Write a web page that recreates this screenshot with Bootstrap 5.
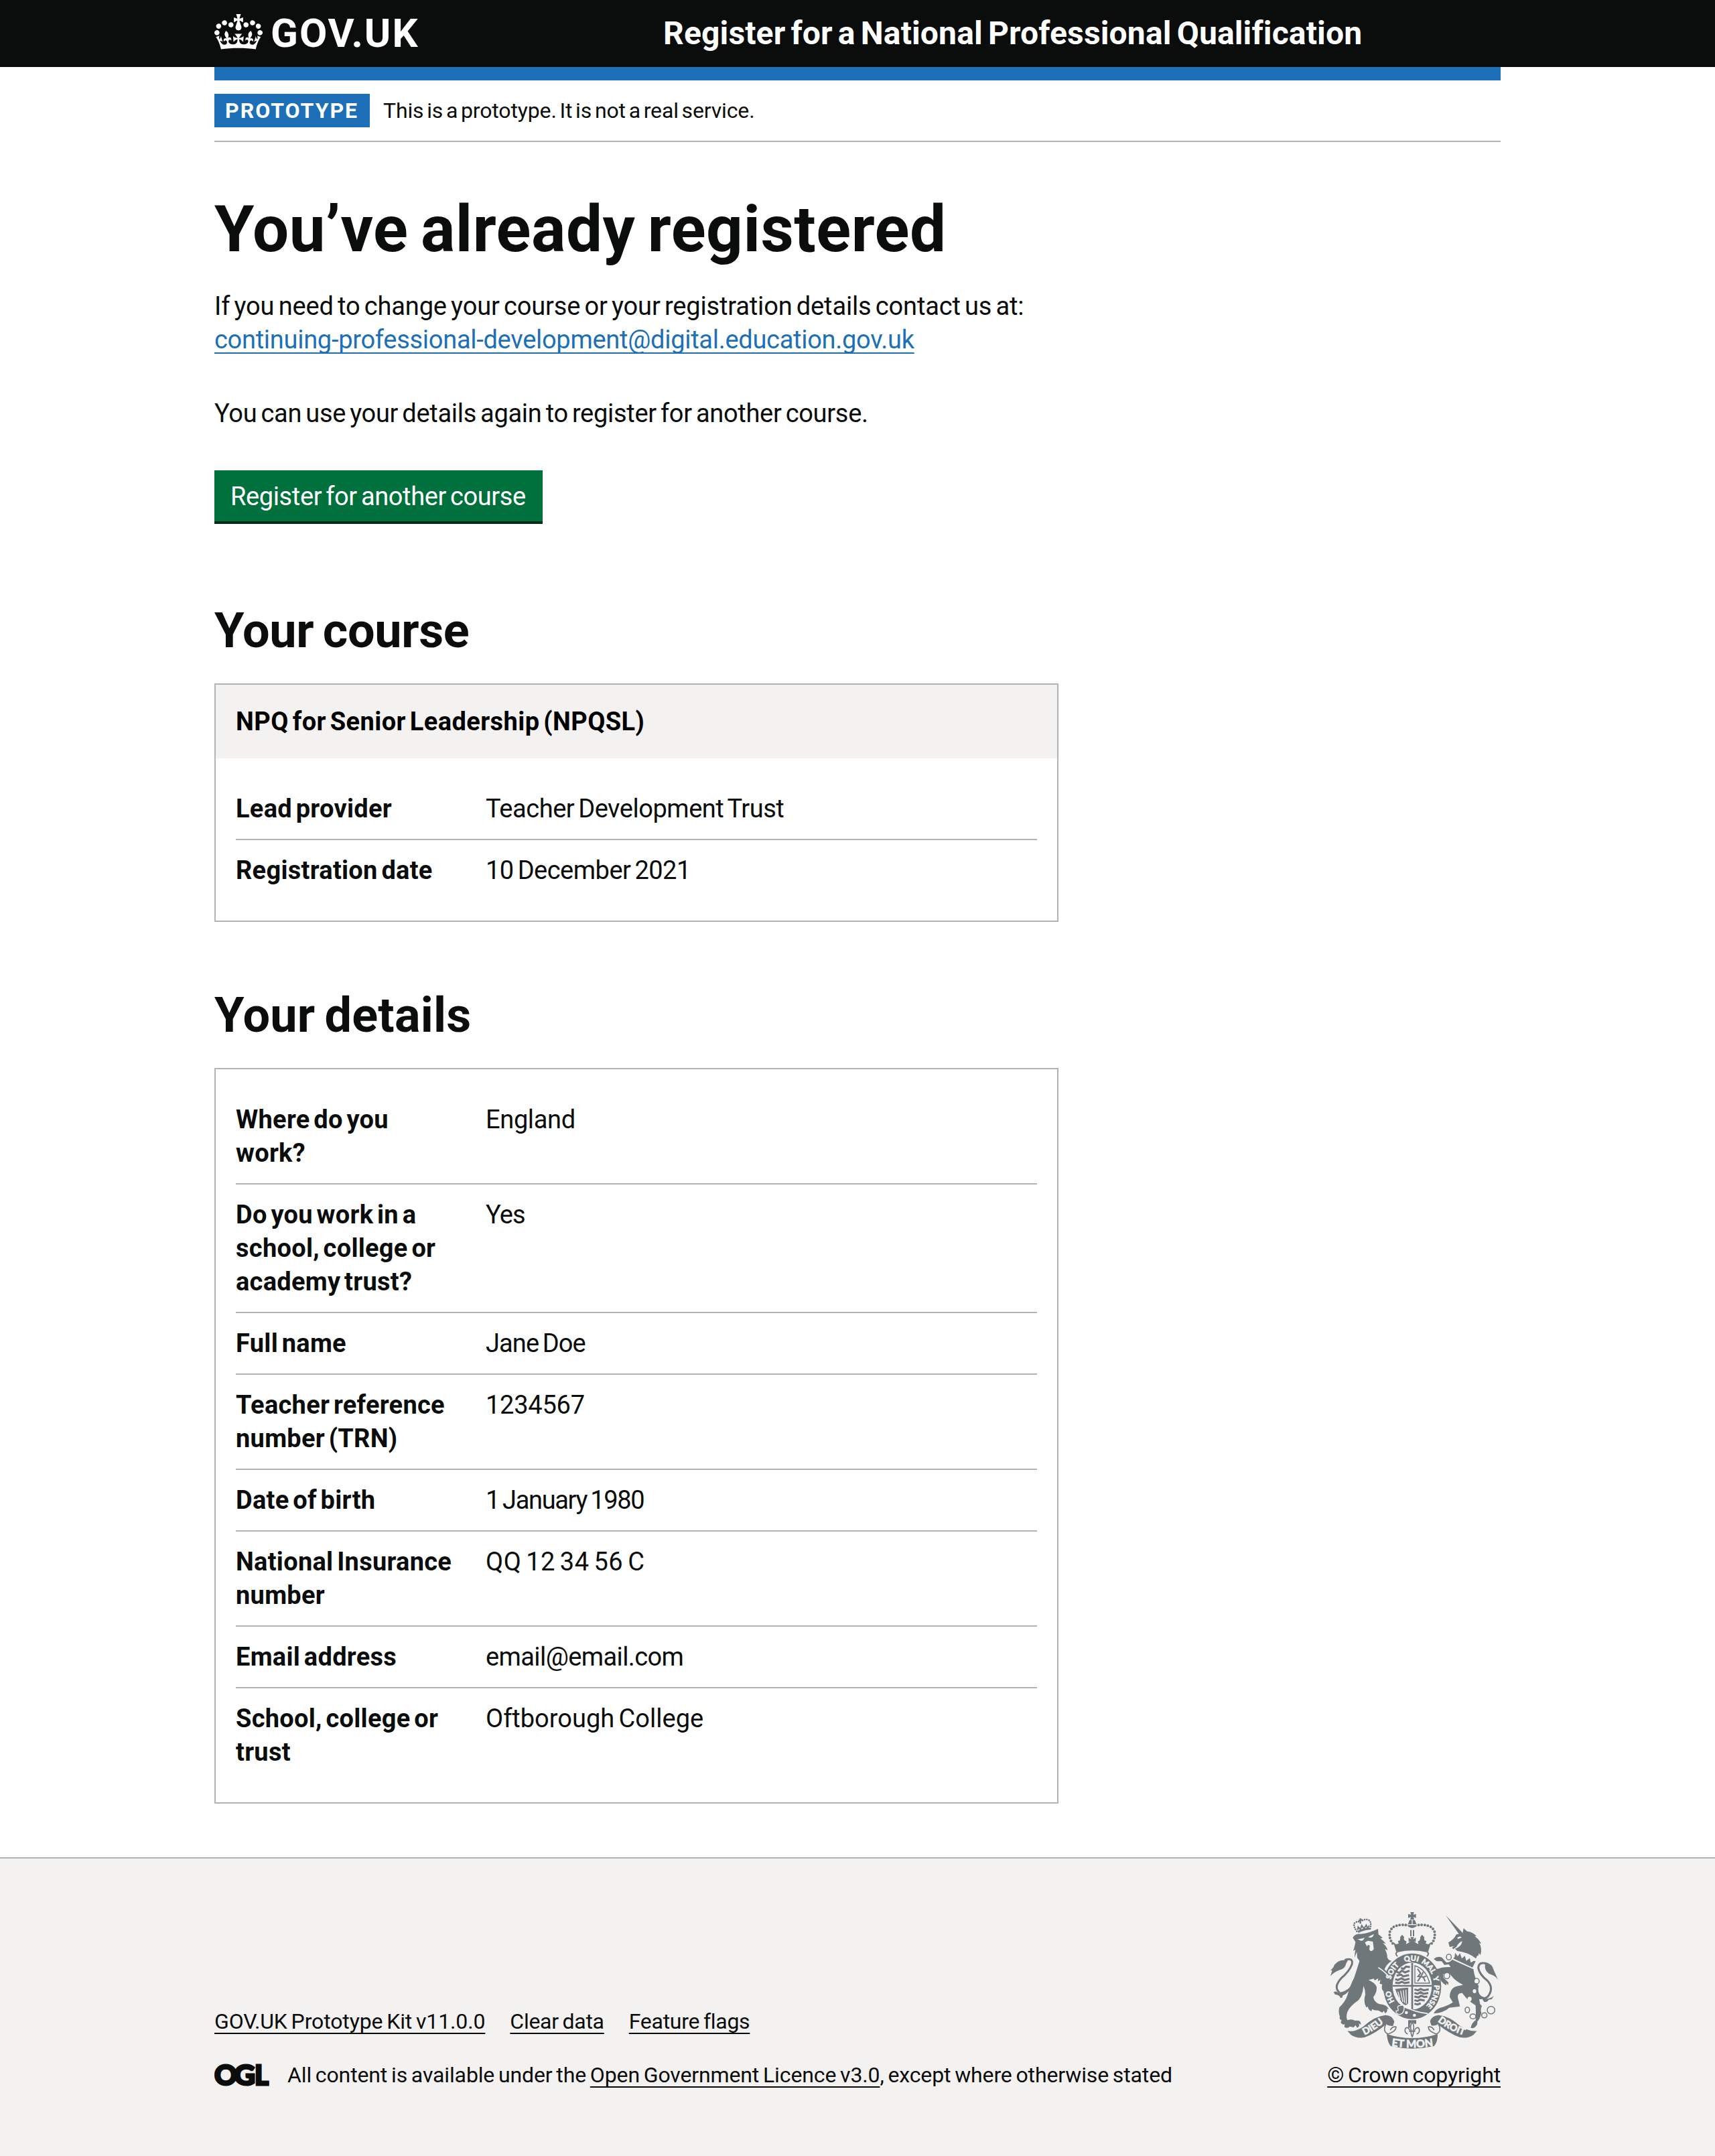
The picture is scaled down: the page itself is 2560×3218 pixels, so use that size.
<!DOCTYPE html>
<html lang="en">
<head>
<meta charset="utf-8">
<meta name="viewport" content="width=device-width, initial-scale=1">
<title>You’ve already registered - Register for a National Professional Qualification</title>
<link href="https://cdn.jsdelivr.net/npm/bootstrap@5.3.0/dist/css/bootstrap.min.css" rel="stylesheet">
<style>
  :root { --ink:#0b0c0c; --blue:#1d70b8; --rule:#b1b4b6; --pale:#f3f2f1; }
  body { font-family:Roboto,"Liberation Sans",sans-serif; font-size:38px; line-height:50px; color:var(--ink); letter-spacing:-.15px; word-spacing:-3px; }
  h1, h2, dt { font-weight:700; }
  .page-width { width:1920px; max-width:100%; margin:0 auto; }

  .site-header { background:var(--ink); color:#fff; height:100px; }
  .brand { width:670px; height:100px; color:#fff; gap:12px; }
  .brand svg { width:72px; height:53px; margin-bottom:5px; }
  .brand-name { font-size:60px; font-weight:700; letter-spacing:2px; line-height:100px; }
  .service-name { font-size:48px; font-weight:700; letter-spacing:.15px; word-spacing:-4px; }
  .blue-bar { height:20px; background:var(--blue); }

  .phase { padding:20px 0; border-bottom:2px solid var(--rule); font-size:32px; }
  .phase-tag { width:232px; height:50px; padding-left:16px; background:var(--blue); color:#fff; font-weight:700; letter-spacing:2px; margin-right:20px; }

  main { padding:80px 0; }
  .two-thirds { width:1260px; }
  h1 { font-size:96px; line-height:100px; margin:0 0 40px; letter-spacing:.55px; word-spacing:-6px; }
  h2 { font-size:72px; line-height:80px; margin:0 0 38px; letter-spacing:-.35px; word-spacing:-4px; }
  h2.second { margin-top:100px; letter-spacing:.2px; }
  main p { margin-bottom:60px; }
  .lnk { color:var(--blue); text-decoration:underline; text-decoration-thickness:2px; text-underline-offset:6px; text-decoration-skip-ink:none; }
  .btn-start { background:#00703c; color:#fff; border:0; border-radius:0; box-shadow:0 4px 0 #002d18; height:76px; width:490px; font-size:38px; line-height:50px; padding:14px 0 12px 24px; text-align:left; letter-spacing:-.38px; margin-bottom:124px; }
  .btn-start:hover { background:#005a30; color:#fff; }

  .summary { border:2px solid var(--rule); border-radius:0; }
  .summary-head { height:110px; padding:0 30px; background:var(--pale); font-weight:700; letter-spacing:.42px; word-spacing:-4px; color:#000; }
  .summary dl { margin:30px; }
  .summary dl > div { padding:20px 0; border-bottom:2px solid var(--rule); }
  .summary dl > div:last-child { border-bottom:0; }
  .summary dt { width:373px; padding-right:45px; letter-spacing:.28px; word-spacing:-4px; flex:none; }
  .summary dd { margin:0; }

  .site-footer { border-top:2px solid var(--rule); background:var(--pale); height:446px; padding-top:79px; font-size:32px; line-height:40px; letter-spacing:-.13px; word-spacing:-2px; }
  .site-footer .lnk { color:var(--ink); }
  .foot-links { gap:37px; margin-bottom:40px; }
  .ogl { width:82px; height:60px; margin:-10px 27px -10px 0; }
  .crest { width:250px; height:206px; margin-bottom:18px; overflow:visible; }

  .sp-link { letter-spacing:-.28px; }
  .sp-again { letter-spacing:-.3px; }
  .sp-trust { letter-spacing:-.47px; }
  .sp-reg { letter-spacing:-.5px; }
  .sp-england { letter-spacing:-.35px; }
  .sp-name { letter-spacing:-.9px; }
  .sp-trn { letter-spacing:-.25px; }
  .sp-dob { letter-spacing:-1.35px; }
  .sp-ni { letter-spacing:.5px; }
  .sp-email { letter-spacing:-.6px; }
  .sp-school { letter-spacing:0; }
  .sp-short { letter-spacing:-.27px; }
</style>
</head>
<body>
<header class="site-header">
  <div class="page-width d-flex align-items-center">
    <a class="brand d-flex align-items-center text-decoration-none" href="#">
      <svg viewBox="0 0 132 97" fill="currentColor" aria-hidden="true"><path fill-rule="evenodd" d="M25 30.2c3.5 1.5 7.7-.2 9.1-3.7 1.5-3.6-.2-7.8-3.9-9.2-3.6-1.4-7.6.3-9.1 3.9-1.4 3.5.3 7.5 3.9 9zM9 39.5c3.6 1.5 7.8-.2 9.2-3.7 1.5-3.6-.2-7.8-3.9-9.1-3.6-1.5-7.6.2-9.1 3.8-1.4 3.5.3 7.5 3.8 9zM4.4 57.2c3.5 1.5 7.7-.2 9.1-3.8 1.5-3.6-.2-7.7-3.9-9.1-3.5-1.5-7.6.3-9.1 3.8-1.4 3.5.3 7.6 3.9 9.1zm38.3-21.4c3.5 1.5 7.7-.2 9.1-3.8 1.5-3.6-.2-7.7-3.9-9.1-3.6-1.5-7.6.3-9.1 3.8-1.3 3.6.4 7.7 3.9 9.1zm64.4-5.6c-3.6 1.5-7.8-.2-9.1-3.7-1.5-3.6.2-7.8 3.8-9.2 3.6-1.4 7.7.3 9.2 3.9 1.3 3.5-.4 7.5-3.9 9zm15.9 9.3c-3.6 1.5-7.7-.2-9.1-3.7-1.5-3.6.2-7.8 3.7-9.1 3.6-1.5 7.7.2 9.2 3.8 1.5 3.5-.3 7.5-3.8 9zm4.7 17.7c-3.6 1.5-7.8-.2-9.2-3.8-1.5-3.6.2-7.7 3.9-9.1 3.6-1.5 7.7.3 9.2 3.8 1.3 3.5-.4 7.6-3.9 9.1zM89.3 35.8c-3.6 1.5-7.8-.2-9.2-3.8-1.4-3.6.2-7.7 3.9-9.1 3.6-1.5 7.7.3 9.2 3.8 1.4 3.6-.3 7.7-3.9 9.1zM69.7 17.7l8.9 4.7V9.3l-8.9 2.8c-.2-.3-.5-.6-.9-.9L72.4 0H59.6l3.5 11.2c-.3.3-.6.5-.9.9l-8.8-2.8v13.1l8.8-4.7c.3.3.6.7.9.9l-5 15.4v.1c-.2.8-.4 1.6-.4 2.4 0 4.1 3.1 7.5 7 8.1h.2c.3 0 .7.1 1 .1.4 0 .7 0 1-.1h.2c4-.6 7.1-4.1 7.1-8.1 0-.8-.1-1.7-.4-2.4V34l-5.1-15.4c.4-.2.7-.6 1-.9zM66 92.8c16.9 0 32.8 1.1 47.1 3.2 4-16.9 8.9-26.7 14-33.5l-9.6-3.4c1 4.9 1.1 7.2 0 10.2-1.5-1.4-3-4.3-4.2-8.7L108.6 76c2.8-2 5-3.2 7.5-3.3-4.4 9.4-10 11.9-13.6 11.2-4.3-.8-6.3-4.6-5.6-7.9 1-4.7 5.7-5.9 8-.5 4.3-8.7-3-11.4-7.6-8.8 7.1-7.2 7.9-13.5 2.1-21.1-8 6.1-8.1 12.3-4.5 20.8-4.7-5.4-12.1-2.5-9.5 6.2 3.4-5.2 7.9-2 7.2 3.1-.6 4.3-6.4 7.8-13.5 7.2-10.3-.9-10.9-8-11.2-13.8 2.5-.5 7.1 1.8 11 7.3L80.2 60c-4.1 4.4-8 5.3-12.3 5.4 1.4-4.4 8-11.6 8-11.6H55.5s6.4 7.2 7.9 11.6c-4.2-.1-8-1-12.3-5.4l1.4 16.4c3.9-5.5 8.5-7.7 10.9-7.3-.3 5.8-.9 12.8-11.1 13.8-7.2.6-12.9-2.9-13.5-7.2-.7-5 3.8-8.3 7.1-3.1 2.7-8.7-4.6-11.6-9.4-6.2 3.7-8.5 3.6-14.7-4.6-20.8-5.8 7.6-5 13.9 2.2 21.1-4.7-2.6-11.9.1-7.7 8.8 2.3-5.5 7.1-4.2 8.1.5.7 3.3-1.3 7.1-5.7 7.9-3.5.7-9-1.8-13.5-11.2 2.5.1 4.7 1.3 7.5 3.3l-4.7-15.4c-1.2 4.4-2.7 7.2-4.3 8.7-1.1-3-.9-5.3 0-10.2l-9.5 3.4c5 6.9 9.9 16.7 14 33.5 14.8-2.1 30.8-3.2 47.7-3.2z"/></svg>
      <span class="brand-name">GOV.UK</span>
    </a>
    <span class="service-name">Register for a National Professional Qualification</span>
  </div>
</header>

<div class="page-width">
  <div class="blue-bar"></div>
  <div class="phase d-flex align-items-center">
    <span class="phase-tag">PROTOTYPE</span>
    <span>This is a prototype. It is not a real service.</span>
  </div>

  <main>
    <div class="two-thirds">
      <h1>You’ve already registered</h1>
      <p>If you need to change your course or your registration details contact us at:<br>
        <a class="lnk sp-link" href="#">continuing-professional-development@digital.education.gov.uk</a></p>
      <p class="sp-again">You can use your details again to register for another course.</p>
      <a class="btn btn-start d-block" href="#">Register for another course</a>

      <h2>Your course</h2>
      <section class="card summary">
        <div class="summary-head d-flex align-items-center">NPQ for Senior Leadership (NPQSL)</div>
        <dl>
          <div class="d-flex"><dt>Lead provider</dt><dd class="sp-trust">Teacher Development Trust</dd></div>
          <div class="d-flex"><dt>Registration date</dt><dd class="sp-reg">10 December 2021</dd></div>
        </dl>
      </section>

      <h2 class="second">Your details</h2>
      <section class="card summary">
        <dl>
          <div class="d-flex"><dt>Where do you work?</dt><dd class="sp-england">England</dd></div>
          <div class="d-flex"><dt>Do you work in a school, college or academy trust?</dt><dd class="sp-name">Yes</dd></div>
          <div class="d-flex"><dt>Full name</dt><dd class="sp-name">Jane Doe</dd></div>
          <div class="d-flex"><dt>Teacher reference number (TRN)</dt><dd class="sp-trn">1234567</dd></div>
          <div class="d-flex"><dt>Date of birth</dt><dd class="sp-dob">1 January 1980</dd></div>
          <div class="d-flex"><dt>National Insurance number</dt><dd class="sp-ni">QQ 12 34 56 C</dd></div>
          <div class="d-flex"><dt>Email address</dt><dd class="sp-email">email@email.com</dd></div>
          <div class="d-flex"><dt>School, college or trust</dt><dd class="sp-school">Oftborough College</dd></div>
        </dl>
      </section>
    </div>
  </main>
</div>

<footer class="site-footer">
  <div class="page-width d-flex justify-content-between align-items-end">
    <div>
      <div class="foot-links d-flex">
        <a class="lnk" href="#">GOV.UK Prototype Kit v11.0.0</a>
        <a class="lnk sp-short" href="#">Clear data</a>
        <a class="lnk sp-short" href="#">Feature flags</a>
      </div>
      <div class="d-flex align-items-center">
        <svg class="ogl" viewBox="0 -13 82 60" role="img" aria-label="OGL"><g fill="#0b0c0c" stroke="#0b0c0c" stroke-width="3" font-family="Lato,sans-serif" font-weight="900" font-size="42.5" letter-spacing="0"><text x="0" y="32.2" textLength="34" lengthAdjust="spacingAndGlyphs">O</text><text x="29" y="32.2" textLength="32" lengthAdjust="spacingAndGlyphs">G</text><text x="60" y="32.2" textLength="21" lengthAdjust="spacingAndGlyphs">L</text></g></svg>
        <span>All content is available under the <a class="lnk" href="#">Open Government Licence v3.0</a>, except where otherwise stated</span>
      </div>
    </div>
    <div class="d-flex flex-column align-items-center">
      <svg class="crest" viewBox="72 69 750 618" aria-hidden="true">
        <defs>
          <path id="ringpath" d="M438 516A99 113 0 0 1 438 290A99 113 0 0 1 438 516"/>
          <path id="dieu" d="M212 628Q270 604 320 560"/>
          <path id="droit" d="M546 556Q600 602 676 626"/>
          <path id="etmon" d="M345 672Q438 686 532 672"/>
        </defs>
        <g fill="#6f777b">
          <!-- lion -->
          <path d="M172 186Q184 168 205 170Q240 168 285 147L287 172L306 187L296 190Q312 202 320 214L306 210Q324 226 328 242L316 238Q328 262 326 274Q332 290 346 290Q322 306 314 328Q336 350 343 380L349 392L337 402Q352 412 348 426L338 418Q336 432 326 429L318 418Q312 432 304 420Q300 408 304 396L292 392L296 376L284 382L286 368L270 378L266 370L242 376Q272 388 279 408Q280 432 264 452Q266 474 292 484Q326 486 333 508L326 504Q328 520 316 525L312 514L304 522L286 512Q270 514 258 506L256 516Q240 510 240 496L232 498Q218 474 228 440Q228 420 220 402Q218 440 198 466Q158 494 148 518Q140 540 148 556Q168 548 182 558Q210 554 208 576L198 570Q206 584 192 590L184 578L176 588L158 584Q146 596 134 586L136 574Q124 578 118 566L122 556Q110 552 114 540Q106 520 112 498Q138 474 148 444Q160 400 178 366Q190 330 202 290L192 277L190 250L180 276Q180 254 184 240L174 246Q182 220 184 206Z"/>
          <path d="M194 156Q220 142 250 142L252 150Q220 152 197 165Z"/>
          <path d="M150 288Q100 280 84 320L72 334L80 332L72 358Q88 340 116 330Q138 324 142 302L150 288Z"/>
          <path d="M86 430Q100 424 104 432Q124 432 138 424Q160 412 166 396Q160 432 126 446Q128 456 116 456Q116 444 92 440Z"/>
          <!-- unicorn -->
          <path d="M588 86L665 166L650 174Z"/>
          <path d="M668 144L684 158Q710 160 726 180L718 180Q742 198 746 214L738 210Q752 232 744 264L736 256L734 268Q728 264 724 280Q690 252 640 246L630 236Q660 226 662 202Q648 206 636 228L622 238L616 232L626 224L606 228L600 208Q624 196 636 172L664 166Z"/>
          <path d="M618 284L712 326Q716 360 736 404Q726 424 752 462L738 462L742 484L750 492Q742 510 748 522Q742 550 730 562Q732 584 710 592L700 590Q706 566 722 556Q724 520 722 490Q684 466 662 434Q636 434 644 462L652 494L604 500Q580 522 534 526Q546 502 580 496Q602 488 620 476L606 452Q606 408 646 402L666 398Q630 380 614 358L602 344L576 350L578 366L600 386L600 400L592 390L590 400Q566 386 564 370L556 344L546 328Q574 316 610 318L602 306L582 308L570 292L548 292L534 282Q552 266 572 276L590 296Q604 300 618 284Z"/>
          <path d="M628 272L630 254L642 270L652 256L660 280L674 268L680 290L696 278L700 298L714 290L722 292L708 320L622 280Z"/>
          <path d="M764 298Q796 300 804 334L822 374Q808 356 792 352Q768 344 764 320Z"/>
          <path d="M756 468Q746 448 722 432Q740 458 762 460Q790 460 804 446L794 462L780 464Q776 476 760 474Z"/>
          <!-- garter ring -->
          <path fill-rule="evenodd" d="M438 257A130 147 0 0 1 438 551A130 147 0 0 1 438 257ZM438 298A88 105 0 0 0 438 508A88 105 0 0 0 438 298Z"/>
          <!-- large crown -->
          <path d="M430 72H446L443 84L455 80V98L443 94L448 106H428L433 94L420 98V80L433 84Z"/>
          <path d="M426 108H450L458 128Q454 142 438 143Q420 142 418 128Z"/>
          <path d="M354 208L366 216L378 212Q370 198 382 200Q386 192 384 184L393 173L402 184Q398 196 406 200Q416 200 410 216L424 208L432 200L422 206V186L434 194L430 184H446L442 194L454 186V206L444 200L452 208L466 216Q460 200 470 200Q476 194 474 184L482 173L492 184Q490 194 494 200Q506 198 498 212L510 216L522 208L510 248Q438 230 366 248Z"/>
          <!-- shield -->
          <path d="M434 300H442V508H434ZM350 398H526V406H350Z"/>
          <path d="M362 416Q390 412 420 410V480Q412 494 398 484Q376 456 362 416Z"/>
          <path d="M420 556H456V572H448L438 562L428 572V590H420Z"/>
          <!-- ribbons -->
          <path d="M148 604Q184 610 222 582Q270 538 318 533Q350 534 358 562L352 582Q330 582 322 574Q270 618 226 632Q190 640 164 622Z"/>
          <path d="M728 604Q690 608 650 580Q606 538 556 533Q524 536 518 562L524 580Q546 582 552 574Q606 618 650 632Q688 640 712 622Z"/>
          <path d="M324 618Q438 654 552 618Q552 654 536 672Q438 694 342 672Q328 658 324 618Z"/>
        </g>
        <g fill="none" stroke="#6f777b" stroke-width="7">
          <path d="M136 286Q176 274 168 306Q156 338 120 368Q84 408 112 432" stroke-width="9"/>
          <path d="M776 304Q736 290 734 322Q740 352 774 378Q804 410 780 446Q760 474 728 434" stroke-width="9"/>
          <path d="M424 132Q352 120 338 160Q332 196 358 220M452 132Q524 120 538 160Q544 196 518 220" stroke-width="12" stroke-linecap="round" stroke-dasharray="0 14"/>
          <path d="M190 158Q168 126 184 118Q196 112 204 116M250 146Q258 112 240 106Q224 102 212 112" stroke-width="8" stroke-linecap="round" stroke-dasharray="0 10"/>
          <path d="M206 100V124M198 109L216 107" stroke-width="7"/>
          <path d="M194 152L196 138L206 150L212 132L222 146L232 130L238 144L246 132" stroke-width="6"/>
          <path d="M432 152V180M444 152V180" stroke-width="6"/>
          <path d="M372 270Q358 256 374 248Q438 234 502 248Q518 256 504 270" stroke-width="6"/>
          <path d="M320 574Q304 606 330 618Q366 606 366 586Q350 582 340 600M556 574Q572 606 546 618Q510 606 510 586Q526 582 536 600" stroke-width="5"/>
          <path d="M438 564Q426 584 434 602Q430 614 438 630Q446 614 442 602Q450 584 438 564ZM430 606Q420 582 408 592Q400 610 418 618M446 606Q456 582 468 592Q476 610 458 618M424 606H452" stroke-width="5"/>
          <g stroke-width="4.5"><circle cx="791" cy="511" r="17"/><ellipse cx="761" cy="534" rx="12" ry="11"/><ellipse cx="710" cy="539" rx="13" ry="11"/><ellipse cx="685" cy="510" rx="10" ry="13"/><ellipse cx="726" cy="381" rx="12" ry="13"/><ellipse cx="602" cy="273" rx="11" ry="13"/><ellipse cx="593" cy="356" rx="13" ry="14"/></g>
          <g stroke-width="9">
            <path d="M388 322l12 4 10-10 18 2M366 338l14 6 12-10 14 8 20-8M368 356l20-4 10 8 26-6M362 372l12 4 16-8 14 8 22-6M362 388l16 2 14-6 12 6 22-4"/>
            <path d="M448 418l16 4 12-6 14 6 22-4M448 434l14 4 14-8 12 8 22-4M448 450l18 4 12-8 14 6 14-2M448 466l14 4 12-6 20 4M448 482l14 4 14-6"/>
          </g>
          <path d="M450 312Q500 328 516 390H450Z" stroke-width="4"/>
          <path d="M462 326l14 20-12 14 24 2 8 20M488 340l-12 22-14 20M500 358l-16 8" stroke-width="6"/>
        </g>
        <g fill="#f3f2f1">
          <path d="M192 192Q206 194 224 186Q220 202 208 200ZM240 184L266 170Q264 186 250 186ZM226 208L240 200L262 204L266 238Q256 254 246 240L248 222L240 218L236 226Z"/>
          <ellipse cx="717" cy="426" rx="8" ry="9"/><ellipse cx="695" cy="461" rx="9" ry="10"/><ellipse cx="602" cy="273" rx="8" ry="10"/><ellipse cx="593" cy="356" rx="9" ry="11"/><ellipse cx="726" cy="381" rx="9" ry="10"/>
          <circle cx="412" cy="522" r="7"/><circle cx="448" cy="534" r="7"/>
          <path d="M640 186Q650 178 660 184Q652 192 642 192Z"/>
        </g>
        <g fill="none" stroke="#f3f2f1">
          <path d="M286 320Q316 338 338 366" stroke-width="5"/>
          <path d="M620 284L712 325" stroke-width="4"/>
          <path d="M374 428L384 462M386 424L396 474M398 422L404 478M410 420L412 482" stroke-width="4"/>
          <path d="M402 494Q450 520 508 526" stroke-width="5"/>
          <path d="M420 128H456M438 108V126" stroke-width="4"/>
        </g>
        <path d="M386 490Q402 484 402 500Q402 524 384 530Q364 530 366 514Q380 516 374 504Q370 490 386 490Z" fill="#6f777b" stroke="#f3f2f1" stroke-width="4"/>
        <g fill="#f3f2f1" stroke="#f3f2f1" stroke-width="1.6" font-family="Lato,sans-serif" font-weight="900" font-size="33" text-anchor="middle" letter-spacing="0" word-spacing="0">
          <text><textPath href="#ringpath" startOffset="18%">HO</textPath></text>
          <text><textPath href="#ringpath" startOffset="35%">SOIT</textPath></text>
          <text><textPath href="#ringpath" startOffset="49.5%">QUI</textPath></text>
          <text><textPath href="#ringpath" startOffset="61.5%">MAL</textPath></text>
          <text><textPath href="#ringpath" startOffset="70.5%">Y</textPath></text>
          <text><textPath href="#ringpath" startOffset="82%">PENSE</textPath></text>
          <text font-size="43"><textPath href="#dieu" startOffset="50%">DIEU</textPath></text>
          <text font-size="43"><textPath href="#droit" startOffset="50%">DROIT</textPath></text>
          <text font-size="48"><textPath href="#etmon" startOffset="50%">ET MON</textPath></text>
        </g>
      </svg>
      <a class="lnk" href="#">© Crown copyright</a>
    </div>
  </div>
</footer>
<script src="https://cdn.jsdelivr.net/npm/bootstrap@5.3.0/dist/js/bootstrap.bundle.min.js"></script>
</body>
</html>
